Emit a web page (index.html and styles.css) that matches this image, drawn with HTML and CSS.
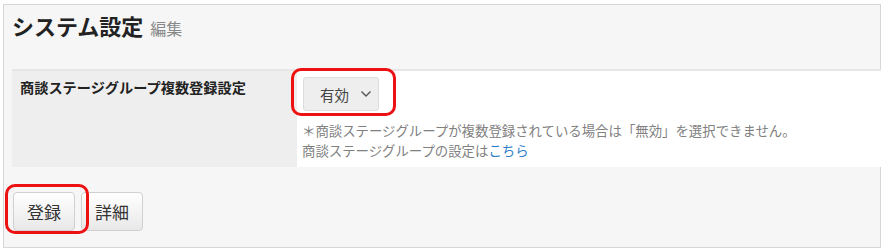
FILE: index.html
```html
<!DOCTYPE html>
<html lang="ja">
<head>
    <meta charset="UTF-8">
    <title>システム設定</title>
    <link rel="stylesheet" href="styles.css">
</head>
<body>
    <div class="panel">
        <h1 class="title">システム設定 <small>編集</small></h1>
        <table class="settings">
            <tr>
                <th>商談ステージグループ複数登録設定</th>
                <td>
                    <span class="mark mark-select">
                        <span class="select">有効
                            <svg width="12" height="8" viewBox="0 0 12 8"><path d="M1.5 1.5 L6 6 L10.5 1.5" fill="none" stroke="#555" stroke-width="1.4"/></svg>
                        </span>
                    </span>
                    <p class="note">＊商談ステージグループが複数登録されている場合は「無効」を選択できません。<br>商談ステージグループの設定は<a href="#">こちら</a></p>
                </td>
            </tr>
        </table>
        <div class="actions">
            <span class="mark mark-btn"><button type="button">登録</button></span>
            <button type="button">詳細</button>
        </div>
    </div>
</body>
</html>
```
FILE: styles.css
```css
body {
    margin: 0;
    font-family: "Noto Sans CJK JP", "Noto Sans", sans-serif;
    background: #ffffff;
}
.panel {
    margin: 4px 4px 0 3px;
    border: 1px solid #d6d6d6;
    background: #f6f6f6;
    padding: 0 0 16px 8px;
    width: 868px;
}
.title {
    margin: 0;
    height: 64px;
    padding-top: 6px;
    box-sizing: border-box;
    font-size: 22px;
    line-height: 28px;
    font-weight: bold;
    color: #222;
}
.title small {
    font-size: 16px;
    font-weight: normal;
    color: #888;
    margin-left: 2px;
}
.settings {
    width: calc(100% + 1px);
    border-collapse: collapse;
    border-top: 2px solid #e6e6e6;
}
.settings th {
    width: 285px;
    background: #eeeeee;
    text-align: left;
    vertical-align: top;
    font-size: 14.2px;
    line-height: 20px;
    color: #222;
    padding: 6px 8px;
    box-sizing: border-box;
}
.settings td {
    background: #ffffff;
    padding: 6px 6px 7px 6px;
    vertical-align: top;
}
.select {
    display: inline-flex;
    align-items: center;
    justify-content: space-between;
    width: 76px;
    height: 34px;
    box-sizing: border-box;
    padding: 0 6px 0 16px;
    background: #eeeeee;
    border: 1px solid #dddddd;
    border-radius: 3px;
    font-size: 14.5px;
    color: #444;
}
.note {
    margin: 10px 0 0 -1px;
    font-size: 13.4px;
    line-height: 19.5px;
    color: #808080;
}
.note a {
    color: #2f7fc8;
    text-decoration: none;
}
.actions {
    display: flex;
    gap: 6px;
    margin-top: 25px;
    padding-left: 1px;
}
button {
    width: 62px;
    height: 39px;
    font-family: inherit;
    font-size: 17px;
    color: #333;
    background: linear-gradient(#ffffff, #e8e8e8);
    border: 1px solid #d0d0d0;
    border-radius: 4px;
    padding: 0;
    display: block;
}
.mark {
    position: relative;
    display: inline-block;
}
.mark::after {
    content: "";
    position: absolute;
    border: 3px solid #ee1111;
    border-radius: 10px;
}
.mark-select {
    vertical-align: top;
}
.mark-select .select {
    vertical-align: top;
}
.mark-select::after {
    left: -12px;
    right: -17px;
    top: -9px;
    bottom: -5px;
}
.mark-btn::after {
    left: -8px;
    right: -14px;
    top: -8px;
    bottom: -3px;
}
```
